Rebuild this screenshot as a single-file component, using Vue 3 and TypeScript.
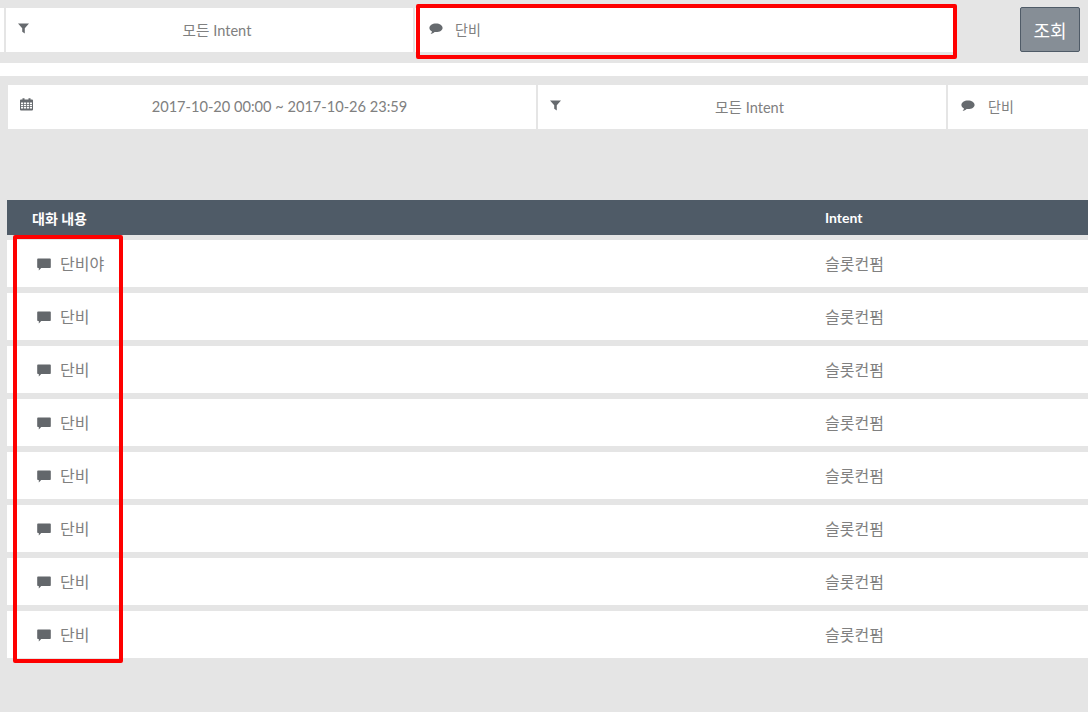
<script setup lang="ts">
const rows = ['단비야', '단비', '단비', '단비', '단비', '단비', '단비', '단비'].map((text, id) => ({ id, text }))
</script>

<template>
  <div class="page">
    <section class="band top">
      <div class="sliver"></div>
      <div class="cell w-intent-top">
        <svg class="ico filter" viewBox="0 0 12 12"><path d="M0 0.5h12L7.4 5.6V11.5L4.6 9.6V5.6z" /></svg>
        <span class="center">모든 Intent</span>
      </div>
      <div class="cell w-answer-top">
        <svg class="ico bubble" viewBox="0 0 14 12"><path d="M7 0.5C3.2 0.5 0.4 2.4 0.4 4.9c0 1.5 1 2.7 2.6 3.5C2.8 9.5 2.2 10.4 1.6 11c1.6-.3 3-1 4-2.1.5.1.9.1 1.4.1 3.8 0 6.6-1.8 6.6-4.1S10.800.5 7 .5z" /></svg>
        <span class="up">단비</span>
      </div>
      <button class="search">조회</button>
    </section>

    <div class="gap-white"></div>

    <section class="band second">
      <div class="cell w-date">
        <svg class="ico cal" viewBox="0 0 13 13"><path fill-rule="evenodd" d="M1 2h1.500V.8h2V2h4V.8h2V2H12a1 1 0 0 1 1 1v9a1 1 0 0 1-1 1H1a1 1 0 0 1-1-1V3a1 1 0 0 1 1-1zM1 5v1.500h2.200V5zm3 0v1.500h2.200V5zm3 0v1.500h2.200V5zm3 0v1.500h2V5zM1 7.300v1.500h2.200V7.300zm3 0v1.500h2.200V7.300zm3 0v1.500h2.200V7.300zm3 0v1.500h2V7.300zM1 9.600v1.500h2.200V9.600zm3 0v1.500h2.200V9.600zm3 0v1.500h2.200V9.600zm3 0v1.500h2V9.600z" /></svg>
        <span class="center">2017-10-20 00:00 ~ 2017-10-26 23:59</span>
      </div>
      <div class="cell w-intent">
        <svg class="ico filter" viewBox="0 0 12 12"><path d="M0 0.5h12L7.4 5.6V11.5L4.6 9.6V5.6z" /></svg>
        <span class="center">모든 Intent</span>
      </div>
      <div class="cell w-answer">
        <svg class="ico bubble" viewBox="0 0 14 12"><path d="M7 0.5C3.2 0.5 0.4 2.4 0.4 4.9c0 1.5 1 2.7 2.6 3.5C2.8 9.5 2.2 10.4 1.6 11c1.6-.3 3-1 4-2.1.5.1.9.1 1.4.1 3.8 0 6.6-1.8 6.6-4.1S10.800.5 7 .5z" /></svg>
        <span class="up">단비</span>
      </div>
    </section>

    <section class="table">
      <div class="thead">
        <span class="col-a">대화 내용</span>
        <span class="col-b">Intent</span>
      </div>
      <div v-for="r in rows" :key="r.id" class="row">
        <div class="col-a text">
          <svg class="msg" viewBox="0 0 14 13"><path d="M1 0.500h12a.8.8 0 0 1 .8.8v8a.8.8 0 0 1-.8.8H4.200L1.800 12.500V10.100H1a.8.8 0 0 1-.8-.8v-8A.8.8 0 0 1 1 .5z" /></svg>
          <span>{{ r.text }}</span>
        </div>
        <div class="col-b">슬롯컨펌</div>
      </div>
    </section>

    <div class="mark mark-top"></div>
    <div class="mark mark-list"></div>
  </div>
</template>

<style scoped>
.page {
  position: relative;
  width: 1088px;
  height: 712px;
  overflow: hidden;
  background: #e5e5e5;
  color: #808080;
  font: 14px Lato, "Noto Sans CJK KR", sans-serif;
}
.band {
  display: flex;
  box-sizing: border-box;
}
.top {
  height: 63px;
  padding-top: 8px;
  gap: 2px;
}
.sliver {
  width: 4px;
  height: 44px;
  background: #fff;
}
.cell {
  position: relative;
  flex: none;
  height: 44px;
  box-sizing: border-box;
  display: flex;
  align-items: center;
  background: #fff;
}
.w-intent-top { width: 407px; }
.w-answer-top { width: 538px; padding-left: 40px; margin-right: 65px; }
.gap-white {
  height: 13px;
  background: #fff;
}
.second {
  padding: 9px 0 0 8px;
  gap: 2px;
  height: 124px;
}
.w-date { width: 528px; }
.w-intent { width: 408px; }
.w-answer { width: 160px; padding-left: 40px; }
.center {
  flex: 1;
  padding: 0 0 2px 15px;
  text-align: center;
  font-size: 14.6px;
}
.up {
  padding-bottom: 2px;
}
.ico {
  position: absolute;
  fill: #666a6e;
}
.filter { left: 12px; top: 15px; width: 11px; height: 11px; }
.bubble { left: 13px; top: 15px; width: 14px; height: 12px; }
.w-answer-top .bubble { left: 14px; }
.cal { left: 12px; top: 12px; width: 13px; height: 14px; }
.search {
  flex: none;
  width: 60px;
  height: 45px;
  padding: 0;
  margin-top: -1px;
  border: 1px solid #4f5b67;
  border-radius: 2px;
  background: #868e96;
  color: #fff;
  font: 18px Lato, "Noto Sans CJK KR", sans-serif;
}
.table {
  padding-left: 7px;
}
.thead {
  display: flex;
  align-items: center;
  height: 35px;
  background: #4f5b67;
  color: #fff;
  font-size: 14px;
  font-weight: 700;
  margin-bottom: 5px;
}
.col-a {
  width: 818px;
  padding-left: 25px;
  box-sizing: border-box;
}
.row {
  display: flex;
  align-items: center;
  height: 47px;
  padding-bottom: 2px;
  box-sizing: border-box;
  margin-bottom: 6px;
  background: #fff;
  font-size: 16px;
}
.text {
  display: flex;
  align-items: center;
  gap: 9px;
  padding-left: 30px;
}
.msg {
  width: 14px;
  height: 13px;
  margin-top: 4px;
  fill: #63676b;
}
.mark {
  position: absolute;
  box-sizing: border-box;
  border: 4px solid #fe0000;
  border-radius: 2px;
}
.mark-top { left: 416px; top: 4px; width: 541px; height: 55px; }
.mark-list { left: 13px; top: 235px; width: 110px; height: 428px; }
</style>
